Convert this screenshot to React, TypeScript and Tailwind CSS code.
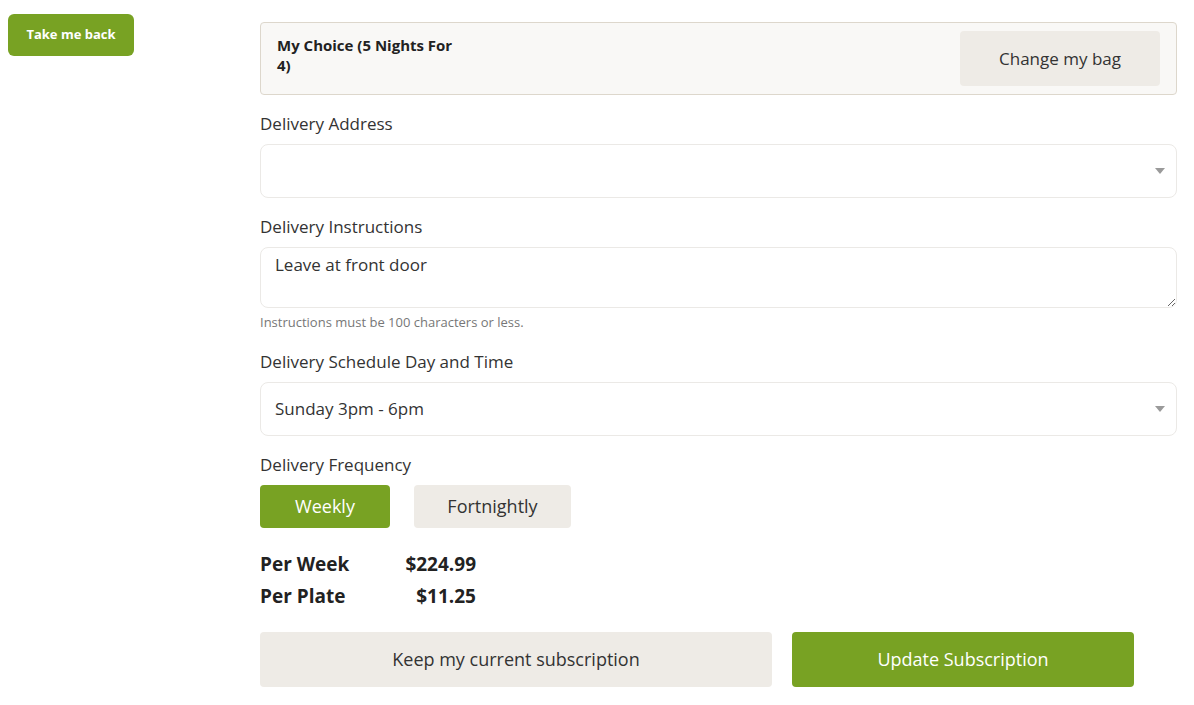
import { useState } from 'react'

function Caret() {
  return (
    <svg width="10" height="6" viewBox="0 0 10 6" className="shrink-0">
      <path d="M0 0h10L5 6z" fill="#9a9a9a" />
    </svg>
  )
}

function FakeSelect({ value }: { value: string }) {
  return (
    <div className="h-[54px] w-full rounded-lg border border-[#ebe9e6] bg-white pl-[14px] pr-[11px] flex items-center justify-between">
      <span className="text-[17px] text-[#333]">{value}</span>
      <Caret />
    </div>
  )
}

function Label({ children, className = '' }: { children: React.ReactNode; className?: string }) {
  return <div className={`text-[17px] leading-6 text-[#333] mb-2 ${className}`}>{children}</div>
}

export default function App() {
  const [frequency, setFrequency] = useState<'weekly' | 'fortnightly'>('weekly')
  const [instructions, setInstructions] = useState('Leave at front door')

  return (
    <div className="flex min-h-[705px] bg-white text-[#333]" style={{ fontFamily: '"Open Sans", "Noto Sans", sans-serif' }}>
      {/* Left column */}
      <div className="w-[260px] shrink-0 pl-2 pt-[14px]">
        <button className="h-[42px] w-[126px] rounded-md bg-[#78a223] text-[13px] font-bold text-white">
          Take me back
        </button>
      </div>

      {/* Main form */}
      <div className="w-[917px] shrink-0 pt-[22px]">
        {/* Bag card */}
        <div className="flex items-start justify-between rounded border border-[#ddd7cc] bg-[#f9f8f6] py-2 pl-4 pr-4">
          <div className="mt-1 w-[182px] text-[15px] font-bold leading-5 text-[#222]">
            My Choice (5 Nights For 4)
          </div>
          <button className="h-[55px] w-[200px] rounded bg-[#eeebe6] text-[17px] text-[#333]">
            Change my bag
          </button>
        </div>

        <Label className="mt-[17px]">Delivery Address</Label>
        <FakeSelect value="" />

        <Label className="mt-[17px]">Delivery Instructions</Label>
        <textarea
          value={instructions}
          onChange={(e) => setInstructions(e.target.value)}
          className="block h-[61px] w-full rounded-lg border border-[#ebe9e6] bg-white px-[14px] pt-[5px] text-[17px] leading-6 text-[#333] outline-none"
        />
        <div className="mt-[5px] text-[13px] leading-[18px] text-[#777]">
          Instructions must be 100 characters or less.
        </div>

        <Label className="mt-[19px]">Delivery Schedule Day and Time</Label>
        <FakeSelect value="Sunday 3pm - 6pm" />

        <Label className="mt-[17px]">Delivery Frequency</Label>
        <div className="flex gap-6">
          <button
            onClick={() => setFrequency('weekly')}
            className={`h-[43px] w-[130px] rounded text-[18px] ${
              frequency === 'weekly' ? 'bg-[#78a223] text-white' : 'bg-[#eeebe6] text-[#333]'
            }`}
          >
            Weekly
          </button>
          <button
            onClick={() => setFrequency('fortnightly')}
            className={`h-[43px] w-[157px] rounded text-[18px] ${
              frequency === 'fortnightly' ? 'bg-[#78a223] text-white' : 'bg-[#eeebe6] text-[#333]'
            }`}
          >
            Fortnightly
          </button>
        </div>

        {/* Prices */}
        <div className="mt-5 text-[19px] font-bold leading-8 text-[#222]">
          <div className="flex">
            <span className="w-[130px]">Per Week</span>
            <span className="w-[86px] text-right">$224.99</span>
          </div>
          <div className="flex">
            <span className="w-[130px]">Per Plate</span>
            <span className="w-[86px] text-right">$11.25</span>
          </div>
        </div>

        <div className="mt-5 flex gap-5">
          <button className="h-[55px] w-[512px] rounded bg-[#eeebe6] text-[18px] text-[#333]">
            Keep my current subscription
          </button>
          <button className="h-[55px] w-[342px] rounded bg-[#78a223] text-[18px] text-white">
            Update Subscription
          </button>
        </div>
      </div>
    </div>
  )
}
